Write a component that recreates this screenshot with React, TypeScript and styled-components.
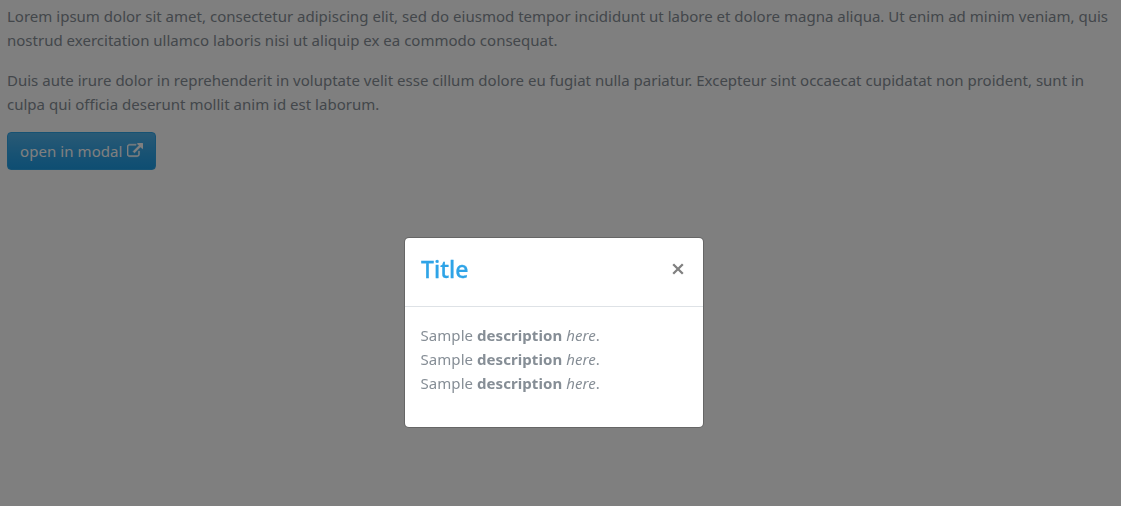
import React from "react";
import styled, { createGlobalStyle } from "styled-components";

const GlobalStyle = createGlobalStyle`
  *, *::before, *::after { box-sizing: border-box; }
  body {
    margin: 0;
    background: #fff;
    color: #868e96;
    font-family: "Segoe UI", "Noto Sans", sans-serif;
    font-size: 15px;
    line-height: 24px;
    letter-spacing: 0.01px;
    overflow: hidden;
  }
`;

const Page = styled.main`
  min-height: 100vh;
  padding: 4px 7px;
`;

const Paragraph = styled.p`
  margin: 0 0 16px;
  white-space: nowrap;
`;

const OpenButton = styled.button`
  display: flex;
  align-items: center;
  justify-content: space-between;
  width: 149px;
  height: 38px;
  padding: 0 12px;
  border: 1px solid #2fa4e7;
  border-radius: 4px;
  background: linear-gradient(#54b4eb, #2fa4e7 60%, #1d9ce5);
  color: #fff;
  font: inherit;
  letter-spacing: 0.07px;
  white-space: nowrap;
`;

const Backdrop = styled.div`
  position: fixed;
  inset: 0;
  background: rgba(0, 0, 0, 0.5);
`;

const Dialog = styled.section`
  position: absolute;
  left: 404px;
  top: 237px;
  width: 300px;
  border: 1px solid rgba(0, 0, 0, 0.2);
  border-radius: 5px;
  background: #fff;
  background-clip: padding-box;
`;

const DialogHeader = styled.header`
  display: flex;
  justify-content: space-between;
  height: 69px;
  padding: 15px 15px 15px 16px;
  border-bottom: 1px solid #dee2e6;
`;

const Title = styled.h4`
  margin: 0;
  color: #2fa4e7;
  font-size: 23px;
  font-weight: 500;
  line-height: 33px;
  -webkit-text-stroke: 0.3px #2fa4e7;
`;

const Close = styled.button`
  display: flex;
  width: 20px;
  height: 32px;
  padding: 0;
  align-items: center;
  justify-content: center;
  border: 0;
  background: none;
  color: #808080;
`;

const DialogBody = styled.div`
  height: 120px;
  padding: 16px 15px 16px 15.5px;
  letter-spacing: 0.06px;
`;

const ExternalLinkIcon = () => (
  <svg
    width="16"
    height="16"
    viewBox="0 0 1792 1792"
    fill="currentColor"
    stroke="currentColor"
    strokeWidth="50"
    aria-hidden="true"
  >
    <path d="M1408 928v320q0 119-84.5 203.5t-203.5 84.5h-832q-119 0-203.5-84.5t-84.5-203.5v-832q0-119 84.5-203.5t203.5-84.5h704q14 0 23 9t9 23v64q0 14-9 23t-23 9h-704q-66 0-113 47t-47 113v832q0 66 47 113t113 47h832q66 0 113-47t47-113v-320q0-14 9-23t23-9h64q14 0 23 9t9 23zm384-864v512q0 26-19 45t-45 19-45-19l-176-176-652 652q-10 10-23 10t-23-10l-114-114q-10-10-10-23t10-23l652-652-176-176q-19-19-19-45t19-45 45-19h512q26 0 45 19t19 45z" />
  </svg>
);

const CloseIcon = () => (
  <svg width="12" height="12" viewBox="0 0 12 12" fill="none" stroke="currentColor" strokeWidth="2.3" aria-hidden="true">
    <path d="M1.2 1.2l9.6 9.6M10.8 1.2l-9.6 9.6" />
  </svg>
);

const SampleLine = () => (
  <div>
    Sample <b>description</b> <i>here</i>.
  </div>
);

export default function App() {
  return (
    <>
      <GlobalStyle />
      <Page>
        <Paragraph>
          Lorem ipsum dolor sit amet, consectetur adipiscing elit, sed do eiusmod tempor incididunt ut labore et dolore magna aliqua. Ut enim ad minim veniam, quis
          <br />
          nostrud exercitation ullamco laboris nisi ut aliquip ex ea commodo consequat.
        </Paragraph>
        <Paragraph>
          Duis aute irure dolor in reprehenderit in voluptate velit esse cillum dolore eu fugiat nulla pariatur. Excepteur sint occaecat cupidatat non proident, sunt in
          <br />
          culpa qui officia deserunt mollit anim id est laborum.
        </Paragraph>
        <OpenButton>
          open in modal
          <ExternalLinkIcon />
        </OpenButton>
      </Page>
      <Backdrop>
        <Dialog role="dialog" aria-modal="true">
          <DialogHeader>
            <Title>Title</Title>
            <Close aria-label="Close">
              <CloseIcon />
            </Close>
          </DialogHeader>
          <DialogBody>
            <SampleLine />
            <SampleLine />
            <SampleLine />
          </DialogBody>
        </Dialog>
      </Backdrop>
    </>
  );
}
